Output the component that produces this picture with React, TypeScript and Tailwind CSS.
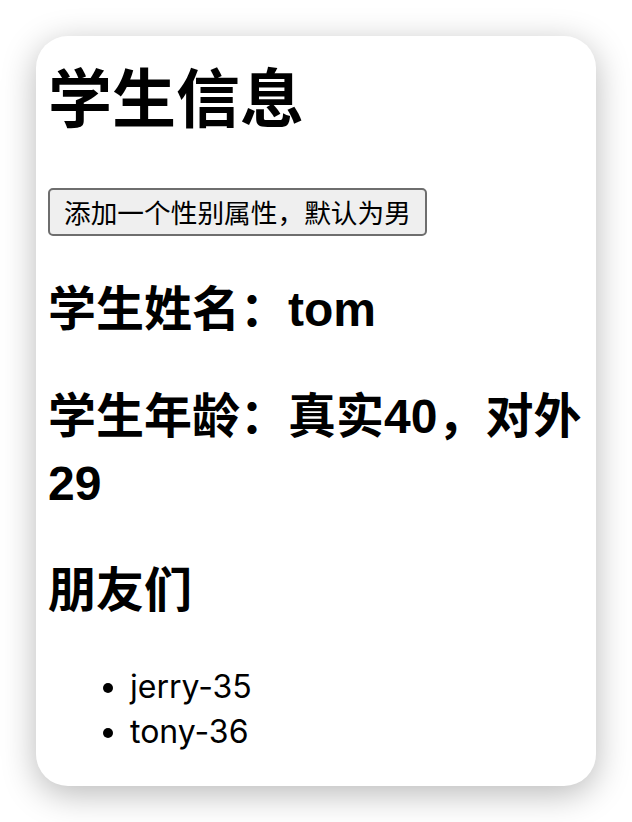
export default function App() {
  return (
    <div className="w-[632px] h-[822px] bg-white overflow-hidden pt-[36px] pl-[36px]">
      <div className="w-[560px] h-[750px] rounded-[32px] bg-white shadow-[0_8px_34px_rgba(0,0,0,0.28)] pt-[19px] pl-[12px] pr-[6px] flex flex-col items-start text-black font-['Liberation_Sans','Noto_Sans_CJK_SC',sans-serif]">
        <h1 className="text-[64px] leading-[90px] font-bold m-0 mb-[43px]">学生信息</h1>
        <button className="h-[48px] px-[14px] text-[26.7px] leading-none border-2 border-[#6e6e6e] rounded-[5px] bg-[#efefef] text-black flex items-center font-['Noto_Sans_CJK_SC',sans-serif]">
          添加一个性别属性，默认为男
        </button>
        <h2 className="text-[48px] leading-[67px] font-bold mt-[40px]">学生姓名：tom</h2>
        <h2 className="text-[48px] leading-[67px] font-bold mt-[40px] w-full">学生年龄：真实40，对外29</h2>
        <h2 className="text-[48px] leading-[67px] font-bold mt-[40px]">朋友们</h2>
        <ul className="list-disc pl-[82px] mt-[40px] text-[32px] leading-[45px] font-['Inter','Noto_Sans_CJK_SC',sans-serif]">
          <li>jerry-35</li>
          <li>tony-36</li>
        </ul>
      </div>
    </div>
  );
}
